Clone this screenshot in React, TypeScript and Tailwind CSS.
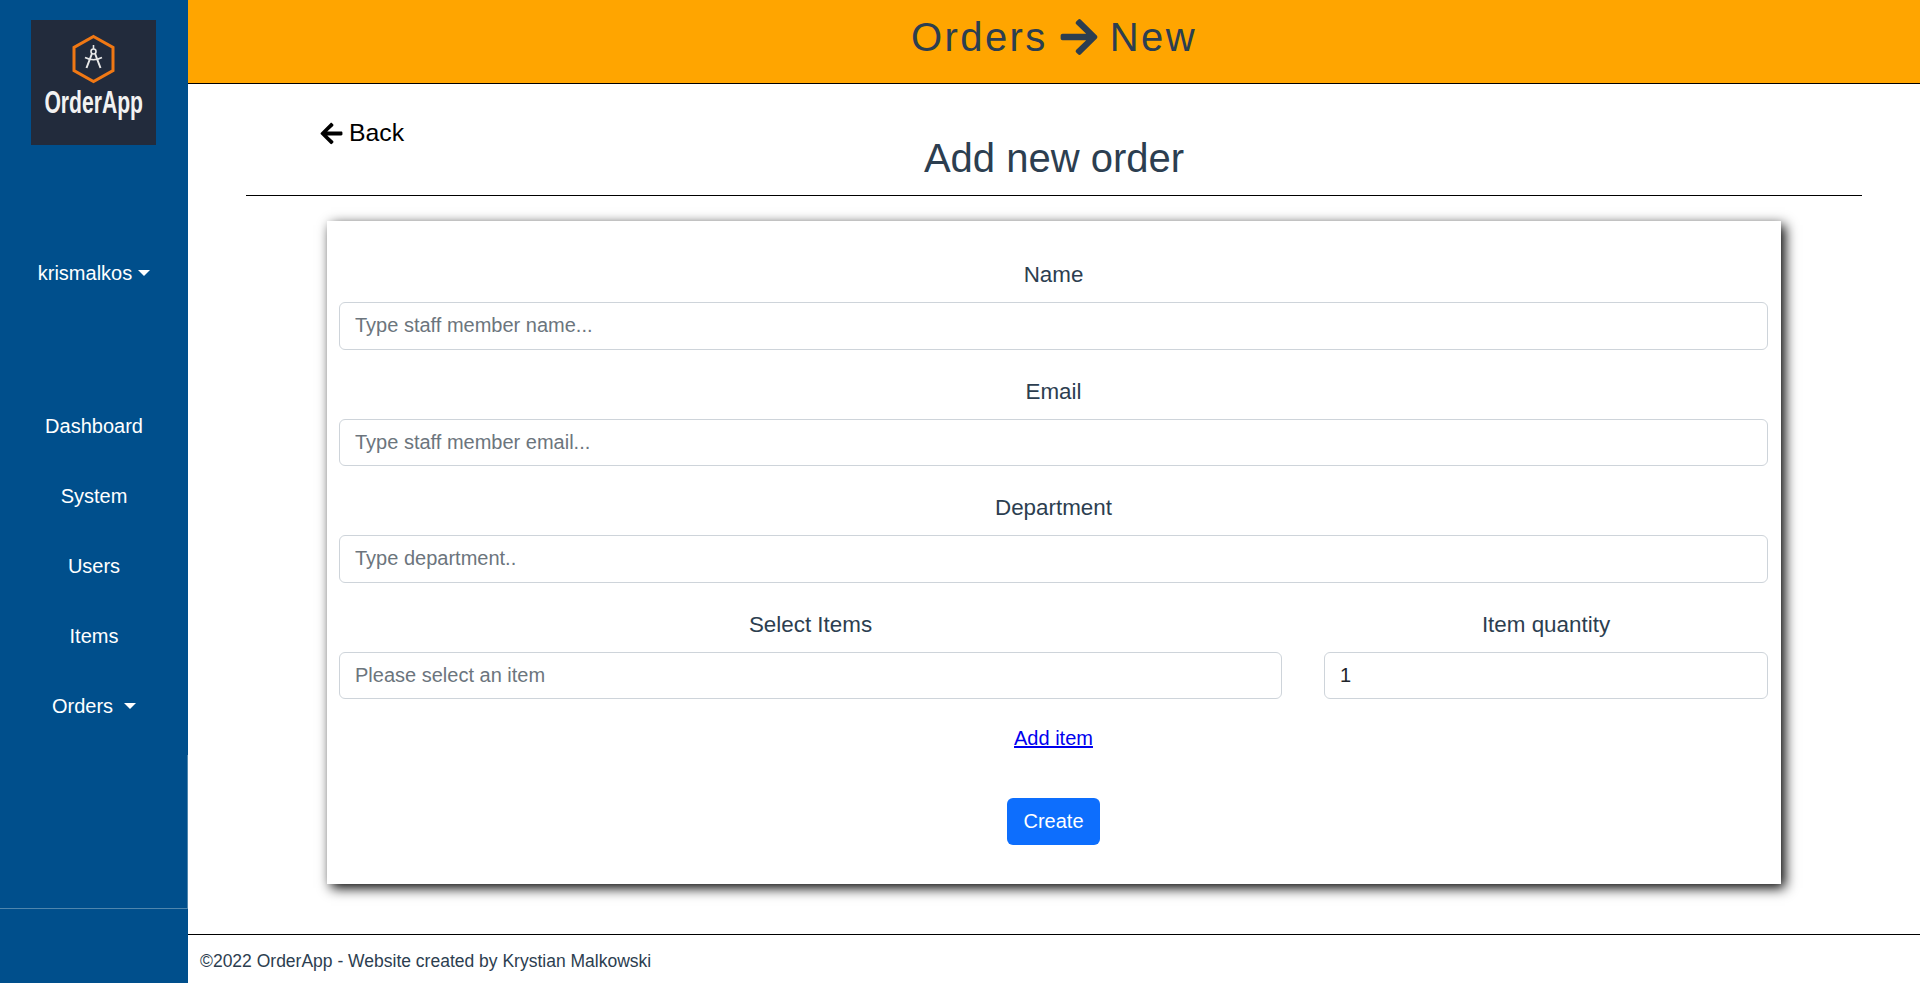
import React from 'react';
import { FaArrowLeft, FaArrowRight } from 'react-icons/fa';

const Caret: React.FC<{ className?: string }> = ({ className = '' }) => (
  <span className={`inline-block w-0 h-0 border-x-[6px] border-x-transparent border-t-[6px] border-t-white ${className}`} />
);

const Logo: React.FC = () => (
  <div className="w-[125px] h-[125px] bg-[#222b3c] flex flex-col items-center">
    <svg width="125" height="66" viewBox="0 0 125 66" className="shrink-0">
      <path d="M62.5 16.5 L82 27.5 L82 50.5 L62.5 61.5 L43 50.5 L43 27.5 Z" fill="none" stroke="#f07814" strokeWidth="3" />
      <g fill="none" stroke="#e8e8e8" strokeWidth="1.6">
        <path d="M62.5 25 V29" />
        <circle cx="62.5" cy="31.5" r="2.5" />
        <path d="M60.8 34 L55.5 48 M64.2 34 L69.5 48" strokeWidth="2" />
        <path d="M54 37.5 Q62.5 42 71 37.5" />
      </g>
    </svg>
    <span className="shrink-0 whitespace-nowrap scale-x-[0.66] text-[32px] leading-[32px] font-bold text-[#f2f2f2]">OrderApp</span>
  </div>
);

const navItems = ['Dashboard', 'System', 'Users', 'Items'];

const Sidebar: React.FC = () => (
  <aside className="w-[188px] shrink-0 bg-[#004f8c] text-white flex flex-col items-center text-[20px] leading-[30px]">
    <div className="pt-[20px] mr-[1px]">
      <Logo />
    </div>
    <div className="mt-[113px] flex items-center gap-[6px]">
      <span>krismalkos</span>
      <Caret />
    </div>
    <nav className="mt-[123px] flex flex-col items-center gap-[40px]">
      {navItems.map((item) => (
        <a key={item} href="#">{item}</a>
      ))}
      <a href="#" className="flex items-center gap-[11px]">
        <span>Orders</span>
        <Caret />
      </a>
    </nav>
    <div className="mt-auto mb-[74px] w-full h-[154px] border-r border-b border-[#4f86ad]" />
  </aside>
);

const Field: React.FC<{ label: string; placeholder?: string; value?: string; className?: string }> = ({ label, placeholder, value, className = '' }) => (
  <div className={className}>
    <label className="block text-center text-[22.4px] leading-[34px] mb-[10px] text-[#2c3e50]">{label}</label>
    <input
      type="text"
      placeholder={placeholder}
      defaultValue={value}
      className="block w-full h-[47.5px] px-[15px] text-[20px] text-[#212529] placeholder:text-[#6c757d] bg-white border border-[#ced4da] rounded-[6px] outline-none"
    />
  </div>
);

export default function App() {
  return (
    <div className="flex h-[983px] bg-white font-['Liberation_Sans',sans-serif] overflow-hidden">
      <Sidebar />
      <main className="flex-1 flex flex-col min-w-0">
        <header className="h-[84px] shrink-0 bg-[#ffa500] border-b border-black pb-[10px] flex items-center justify-center gap-[10px] text-[#2c3e50] text-[40px] tracking-[2.4px]">
          <span>Orders</span>
          <FaArrowRight className="w-[42px] h-[42px]" />
          <span>New</span>
        </header>
        <section className="flex-1 px-[58px]">
          <div className="grid grid-cols-[1fr_auto_1fr] border-b border-black pb-[13px]">
            <a href="#" className="mt-[31px] ml-[73px] flex items-center gap-[5px] self-start text-[24.8px] leading-[36px] text-black">
              <FaArrowLeft className="w-[25px] h-[25px]" />
              <span>Back</span>
            </a>
            <h1 className="mt-[50px] text-[40px] leading-[48px] text-[#2c3e50]">Add new order</h1>
            <div />
          </div>
          <form className="mt-[25px] ml-[81px] w-[1454px] h-[663px] bg-white shadow-[4px_4px_12px_#000] pl-[12px] pr-[13px] pt-[37px] flex flex-col gap-[25px]">
            <Field label="Name" placeholder="Type staff member name..." />
            <Field label="Email" placeholder="Type staff member email..." />
            <Field label="Department" placeholder="Type department.." />
            <div className="flex justify-between">
              <Field label="Select Items" placeholder="Please select an item" className="w-[943px]" />
              <Field label="Item quantity" value="1" className="w-[444px]" />
            </div>
            <div className="flex flex-col items-center">
              <a href="#" className="text-[20px] leading-[29px] text-[#0000ee] underline">Add item</a>
              <button type="button" className="mt-[45px] w-[93px] h-[47px] pb-[2px] bg-[#0d6efd] text-white text-[20px] rounded-[6px]">Create</button>
            </div>
          </form>
        </section>
        <footer className="h-[49px] shrink-0 border-t border-black flex items-center pl-[12px] pt-[4px] text-[17.5px] text-[#2c3e50]">
          ©2022 OrderApp - Website created by Krystian Malkowski
        </footer>
      </main>
    </div>
  );
}
